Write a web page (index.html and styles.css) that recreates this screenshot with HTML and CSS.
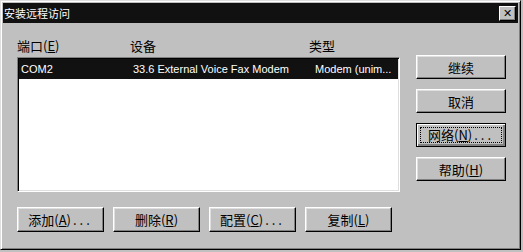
FILE: index.html
```html
<!DOCTYPE html>
<html lang="zh-CN">
<head>
    <meta charset="UTF-8" />
    <title>安装远程访问</title>
    <link rel="stylesheet" href="styles.css">
</head>
<body>
   <div class="dialog">
       <div class="titlebar">
           <span class="title">安装远程访问</span>
           <span class="close">&#x2715;</span>
       </div>
       <div class="content">
           <div class="main">
               <div class="heads">
                   <span>端口(<u>E</u>)</span>
                   <span>设备</span>
                   <span>类型</span>
               </div>
               <div class="list">
                   <div class="row selected">
                       <span>COM2</span>
                       <span>33.6 External Voice Fax Modem</span>
                       <span>Modem (unim...</span>
                   </div>
               </div>
               <div class="bottom">
                   <button class="btn">添加(<u>A</u>)<i>...</i></button>
                   <button class="btn">删除(<u>R</u>)</button>
                   <button class="btn">配置(<u>C</u>)<i>...</i></button>
                   <button class="btn">复制(<u>L</u>)</button>
               </div>
           </div>
           <div class="side">
               <button class="btn">继续</button>
               <button class="btn">取消</button>
               <button class="btn focus"><span>网络(<u>N</u>)<i>...</i></span></button>
               <button class="btn">帮助(<u>H</u>)</button>
           </div>
       </div>
   </div>
</body>
</html>
```

FILE: styles.css
```css
*{
    padding:0;
    margin:0;
    box-sizing:border-box;
}
html,body{
    background:#c0c0c0;
}
body{
    font-family:"Noto Sans CJK SC","Liberation Sans",sans-serif;
    font-size:13px;
    color:#000;
}
i{
    font-style:normal;
    letter-spacing:3px;
    margin-left:2px;
}
.dialog{
    width: 521px;
    height: 250px;
    background:#c0c0c0;
    border:1px solid;
    border-color:#dfdfdf #000 #000 #dfdfdf;
    box-shadow:inset 1px 1px #fff, inset -1px -1px #808080;
    padding:2px;
}
.titlebar{
    height: 20px;
    background:#111;
    color:#fff;
    display:flex;
    align-items:center;
    justify-content:space-between;
    padding:0 2px 0 1px;
}
.title{
    font-size:11px;
    line-height:20px;
}
.close{
    width: 17px;
    height: 15px;
    background:#c0c0c0;
    color:#000;
    font-family:"DejaVu Sans",sans-serif;
    font-weight:bold;
    font-size:11px;
    line-height:14px;
    text-align:center;
    border:1px solid;
    border-color:#fff #000 #000 #fff;
    box-shadow:inset -1px -1px #808080;
}
.content{
    display:flex;
    gap:16px;
    padding:14px 0 0 14px;
}
.main{
    width: 383px;
}
.heads{
    display:grid;
    grid-template-columns:113px 179px 1fr;
    height: 18px;
    line-height:18px;
    margin-bottom:2px;
}
.list{
    height: 135px;
    background:#fff;
    border:1px solid;
    border-color:#808080 #fff #fff #808080;
    box-shadow:inset 1px 1px #000, inset -1px -1px #dfdfdf;
    padding:1px;
}
.row{
    display:grid;
    grid-template-columns:112px 182px 1fr;
    height: 20px;
    line-height:20px;
    font-family:"Liberation Sans",sans-serif;
    font-size:11px;
    padding-left:2px;
    white-space:nowrap;
    overflow:hidden;
}
.row.selected{
    background:#111;
    color:#fff;
}
.bottom{
    display:flex;
    gap:9px;
    margin-top:15px;
}
.btn{
    width: 87px;
    height: 25px;
    font-family:inherit;
    font-size:13px;
    background:#c0c0c0;
    color:#000;
    border:1px solid;
    border-color:#fff #000 #000 #fff;
    box-shadow:inset -1px -1px #808080, inset 1px 1px #dfdfdf;
}
.side{
    width: 90px;
    display:flex;
    flex-direction:column;
    gap:10px;
    padding-top:18px;
}
.side .btn{
    width: 90px;
    height: 24px;
}
.btn.focus{
    border-color:#000;
    box-shadow:inset 1px 1px #fff, inset -2px -2px #808080;
    padding:3px;
}
.btn.focus span{
    display:block;
    height: 100%;
    line-height:14px;
    border:1px dotted #000;
}
```
